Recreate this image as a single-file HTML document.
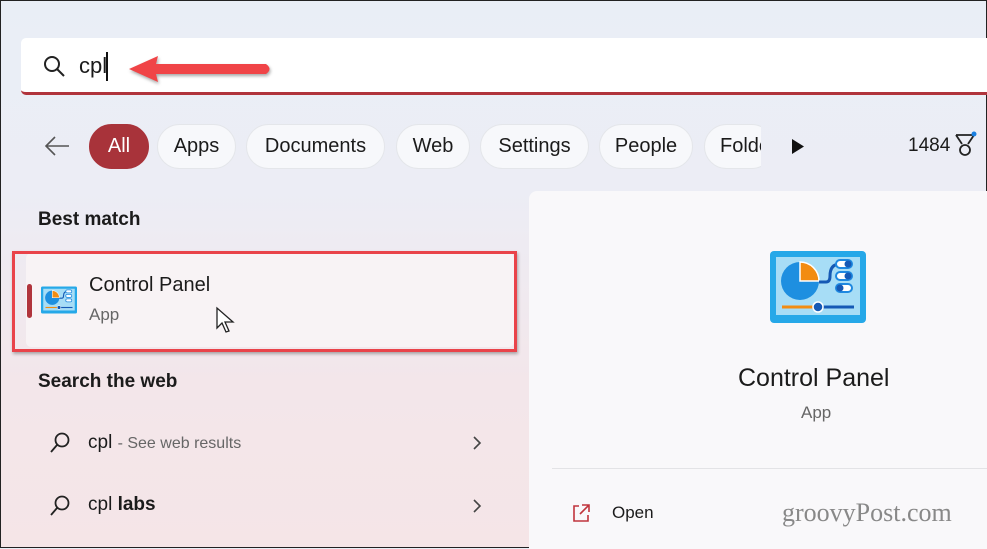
<!DOCTYPE html>
<html><head><meta charset="utf-8"><style>
*{margin:0;padding:0;box-sizing:border-box}
body{width:987px;height:548px;overflow:hidden;font-family:"Liberation Sans",sans-serif;position:relative;border:1px solid #222;
background:linear-gradient(180deg,#e9eef6 0%,#ecedf5 35%,#f3e6ea 70%,#f5e5e7 100%);color:#1b1b1b}
.abs{position:absolute}
.pill{position:absolute;top:123px;height:45px;border-radius:23px;background:#f7f8fb;border:1px solid #e4e6ea;font-size:20px;line-height:43px;text-align:center;color:#1b1b1b}
.t{position:absolute;white-space:nowrap}
</style></head><body>
<div class="abs" style="left:20px;top:37px;width:967px;height:57px;background:#fff;border-radius:5px 0 0 5px;border-bottom:3px solid #b0343c"></div>
<svg class="abs" style="left:40px;top:52px" width="26" height="26" viewBox="0 0 26 26"><circle cx="11" cy="11" r="7" fill="none" stroke="#222" stroke-width="2"/><line x1="16" y1="16" x2="23" y2="23" stroke="#222" stroke-width="2"/></svg>
<div class="t" style="left:78px;top:52px;font-size:22px">cpl</div>
<div class="abs" style="left:105px;top:51px;width:2px;height:29px;background:#111"></div>
<svg class="abs" style="left:125px;top:50px;filter:drop-shadow(1px 2px 1.5px rgba(0,0,0,.35))" width="150" height="38"><path d="M3 18 L32 5 L30 13 L140 13 Q147 18 140 23 L30 23 L32 31 Z" fill="#f04447"/></svg>
<svg class="abs" style="left:42px;top:133px" width="28" height="24"><path d="M26 12 H3 M12 3 L3 12 L12 21" fill="none" stroke="#555" stroke-width="1.6"/></svg>
<div class="pill" style="left:88px;width:60px;background:#a8333a;border-color:#a8333a;color:#fff">All</div>
<div class="pill" style="left:156px;width:79px">Apps</div>
<div class="pill" style="left:245px;width:139px">Documents</div>
<div class="pill" style="left:395px;width:74px">Web</div>
<div class="pill" style="left:479px;width:109px">Settings</div>
<div class="pill" style="left:598px;width:94px">People</div>
<div class="pill" style="left:703px;width:70px;text-align:left;padding-left:15px;clip-path:inset(0 13px 0 0)">Folders</div>
<svg class="abs" style="left:790px;top:137px" width="14" height="17"><path d="M1 1 L13 8.5 L1 16 Z" fill="#111"/></svg>
<div class="t" style="left:907px;top:134px;font-size:19px">1484</div>
<svg class="abs" style="left:952px;top:130px" width="26" height="28"><path d="M3 4 H21 L15 13 M3 4 L9 13" fill="none" stroke="#222" stroke-width="1.8"/><circle cx="12" cy="19" r="5" fill="none" stroke="#222" stroke-width="1.8"/><circle cx="21" cy="3" r="2.5" fill="#1a7fe0"/></svg>
<div class="abs" style="left:528px;top:190px;width:459px;height:358px;background:#f9f8fa;border-radius:8px 0 0 0"></div>
<div class="t" style="left:37px;top:208px;font-size:19px;font-weight:600">Best match</div>
<div class="abs" style="left:25px;top:252px;width:488px;height:94px;background:#f8f3f5;border-radius:5px"></div>
<div class="abs" style="left:11px;top:250px;width:505px;height:101px;border:3px solid #e9434a;box-shadow:1px 2px 3px rgba(0,0,0,.3)"></div>
<div class="abs" style="left:26px;top:283px;width:5px;height:34px;background:#b0343c;border-radius:3px"></div>
<svg class="abs" style="left:40px;top:285px" width="36" height="28" viewBox="0 0 96 72"><rect width="96" height="72" rx="4" fill="#26a8e8"/><rect x="6" y="6" width="84" height="58" fill="#a7ddf6"/><circle cx="30" cy="30" r="19" fill="#1e8fe0"/><path d="M30 11 A19 19 0 0 1 49 30 H30Z" fill="#f28c12" stroke="#fff" stroke-width="1.5"/><path d="M49 31 H56 Q60 31 60 25 Q60 13 70 13" fill="none" stroke="#1559b5" stroke-width="3"/><rect x="66" y="9" width="16" height="8" rx="4" fill="#fff" stroke="#1e88e0" stroke-width="2"/><rect x="66" y="21" width="16" height="8" rx="4" fill="#fff" stroke="#1e88e0" stroke-width="2"/><rect x="66" y="33" width="16" height="8" rx="4" fill="#fff" stroke="#1e88e0" stroke-width="2"/><line x1="12" y1="56" x2="48" y2="56" stroke="#f28c12" stroke-width="3"/><line x1="48" y1="56" x2="84" y2="56" stroke="#1559b5" stroke-width="3"/><circle cx="48" cy="56" r="5" fill="#1559b5" stroke="#fff" stroke-width="1.5"/></svg>
<div class="t" style="left:88px;top:273px;font-size:20px">Control Panel</div>
<div class="t" style="left:88px;top:304px;font-size:17px;color:#666">App</div>
<svg class="abs" style="left:214px;top:305px" width="22" height="30"><path d="M2 2 L2 22 L7 17 L11 26 L14 25 L10 16 L18 16 Z" fill="#fff" stroke="#222" stroke-width="1.3"/></svg>
<div class="t" style="left:37px;top:370px;font-size:19px;font-weight:600">Search the web</div>
<svg class="abs" style="left:47px;top:430px" width="24" height="24"><circle cx="14" cy="9" r="6.5" fill="none" stroke="#222" stroke-width="1.8"/><line x1="9" y1="14" x2="3" y2="21" stroke="#222" stroke-width="1.8"/></svg>
<div class="t" style="left:87px;top:431px;font-size:19px">cpl <span style="font-size:16px;color:#666">- See web results</span></div>
<svg class="abs" style="left:470px;top:434px" width="12" height="16"><path d="M3 2 L9 8 L3 14" fill="none" stroke="#444" stroke-width="1.6"/></svg>
<svg class="abs" style="left:47px;top:493px" width="24" height="24"><circle cx="14" cy="9" r="6.5" fill="none" stroke="#222" stroke-width="1.8"/><line x1="9" y1="14" x2="3" y2="21" stroke="#222" stroke-width="1.8"/></svg>
<div class="t" style="left:87px;top:493px;font-size:19px">cpl <b style="font-weight:600">labs</b></div>
<svg class="abs" style="left:470px;top:497px" width="12" height="16"><path d="M3 2 L9 8 L3 14" fill="none" stroke="#444" stroke-width="1.6"/></svg>
<svg class="abs" style="left:769px;top:250px" width="96" height="72" viewBox="0 0 96 72"><rect width="96" height="72" rx="4" fill="#26a8e8"/><rect x="6" y="6" width="84" height="58" fill="#a7ddf6"/><circle cx="30" cy="30" r="19" fill="#1e8fe0"/><path d="M30 11 A19 19 0 0 1 49 30 H30Z" fill="#f28c12" stroke="#fff" stroke-width="1.5"/><path d="M49 31 H56 Q60 31 60 25 Q60 13 70 13" fill="none" stroke="#1559b5" stroke-width="3"/><rect x="66" y="9" width="16" height="8" rx="4" fill="#fff" stroke="#1e88e0" stroke-width="2"/><rect x="66" y="21" width="16" height="8" rx="4" fill="#fff" stroke="#1e88e0" stroke-width="2"/><rect x="66" y="33" width="16" height="8" rx="4" fill="#fff" stroke="#1e88e0" stroke-width="2"/><circle cx="78" cy="13" r="3.5" fill="#1559b5"/><circle cx="78" cy="25" r="3.5" fill="#1559b5"/><circle cx="70" cy="37" r="3.5" fill="#1559b5"/><line x1="12" y1="56" x2="48" y2="56" stroke="#f28c12" stroke-width="3"/><line x1="48" y1="56" x2="84" y2="56" stroke="#1559b5" stroke-width="3"/><circle cx="48" cy="56" r="5" fill="#1559b5" stroke="#fff" stroke-width="1.5"/></svg>
<div class="t" style="left:737px;top:363px;font-size:25px">Control Panel</div>
<div class="t" style="left:800px;top:402px;font-size:17px;color:#666">App</div>
<div class="abs" style="left:551px;top:467px;width:436px;height:1px;background:#e3e3e6"></div>
<svg class="abs" style="left:569px;top:501px" width="22" height="22"><path d="M9 4 H4 V19 H18 V13 M12 3 H19 V10 M19 3 L10 12" fill="none" stroke="#c0343c" stroke-width="1.6"/></svg>
<div class="t" style="left:611px;top:502px;font-size:17px">Open</div>
<div class="t" style="left:781px;top:497px;font-size:26px;font-family:'Liberation Serif',serif;color:#888">groovyPost.com</div>
</body></html>
